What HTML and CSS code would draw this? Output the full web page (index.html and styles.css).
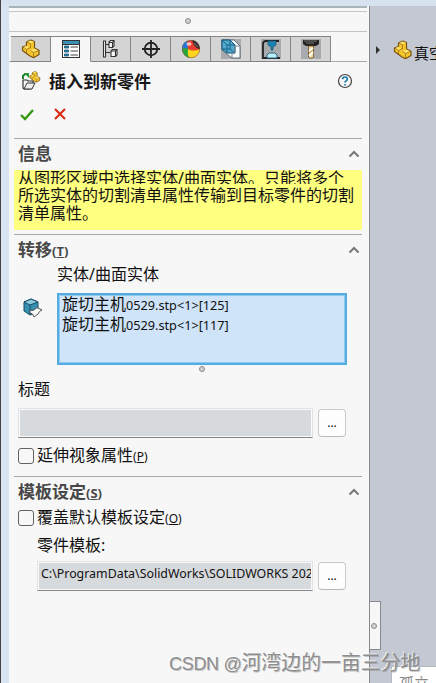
FILE: index.html
```html
<!DOCTYPE html>
<html lang="zh-CN">
<head>
<meta charset="utf-8">
<title>插入到新零件</title>
<link rel="stylesheet" href="styles.css">
</head>
<body>
<svg width="0" height="0" class="defs" aria-hidden="true">
  <defs>
    <symbol id="part" viewBox="0 0 20 20">
      <path d="M5.500 3 9.500 1l4 1.500V9l4.500 2.300v4.200l-5.500 3.200L9 17 1.500 11.500V8l4-1.500z" fill="#f5c72d" stroke="#79520f" stroke-width="1.200" stroke-linejoin="round"/>
      <path d="m6 3 3.300-1.500 3.700 1.300-3.300 1.700zM2 8.200l3.500-1.400 2.500 2-3 1.500zM9.500 11.500l3.800-2 4 1.900-4.600 2.300z" fill="#ffe56b"/>
      <path d="m5.500 3 4 1.700v4.500M2 8l3.500 2.500 4-2M9.500 11.500l3 2 5.500-2.200M12.500 13.500v5M5.500 10.500v3.500" fill="none" stroke="#9c6b11" stroke-width=".8"/>
    </symbol>
    <symbol id="chevron" viewBox="0 0 12 8"><path d="m1.500 6.500 4.500-4.500 4.500 4.500" fill="none" stroke="#777" stroke-width="2"/></symbol>
  </defs>
</svg>
<div class="window">
  <div class="frame-top"></div>
  <div class="workspace">
    <div class="frame-left"></div>
    <main class="panel">
      <div class="grip"><i class="dot"></i></div>
      <nav class="tabs">
        <span class="tab"><svg width="20" height="20"><use href="#part"/></svg></span>
        <span class="tab active"><svg width="18" height="18" viewBox="0 0 18 18"><rect x=".5" y=".5" width="17" height="17" fill="#fff" stroke="#333"/><path d="M1 1h16v3H1z" fill="#3a91b8"/><path d="M1 4.500h16" stroke="#333"/><path d="M2.500 6h4v2h-4zm0 4h4v2h-4zm0 4h4v2h-4z" fill="#2790bb" stroke="#174f69" stroke-width=".8"/><path d="M8.500 7H16m-7.500 4H16m-7.500 4H16" stroke="#444"/></svg></span>
        <span class="tab"><svg width="18" height="18" viewBox="0 0 18 18" fill="#fafafa" stroke="#333" stroke-width="1.100"><path d="M1.500 1h2v16h-2zM3.500 4.500h4m-4 8h5"/><path d="m7 2 1.500-1.500H12V6l-1.500 1.500H7zM9 11l1.500-1.500H15V15l-1.500 1.500H9z"/><path d="M7 2.500h3.500v5m0-5L12 1M9 11h4.500v5m0-5L15 9.500" fill="none"/></svg></span>
        <span class="tab"><svg width="20" height="20" viewBox="0 0 20 20" fill="none" stroke="#222"><circle cx="10" cy="10" r="6.300" stroke-width="1.800"/><path d="M10 1v18M1 10h18" stroke-width="1.800"/></svg></span>
        <span class="tab"><svg width="20" height="20" viewBox="0 0 20 20"><circle cx="10" cy="10" r="9" fill="#e83f2e"/><path d="M1 10q3-2 6 0l1 8.700Q2 17 1 10" fill="#26a738"/><path d="M1 10q0-6 5-8l1 8q-3-2-6 0" fill="#2878db"/><path d="M7 10q5 3 12 0-1 9-9 9-4 0-3-9" fill="#ffd51c"/><path d="M11 1q7 1 8 9-3 0-6-4z" fill="#25191c"/><path d="m13 4 4 4" stroke="#766" stroke-width="1.500"/><ellipse cx="8" cy="5" rx="2.500" ry="1.800" fill="#ffe5df" opacity=".8"/><circle cx="10" cy="10" r="8.700" fill="none" stroke="#665" stroke-width=".6"/></svg></span>
        <span class="tab"><svg class="tile" width="20" height="20" viewBox="0 0 20 20"><path d="M1 1h12l6 6v12h-8l-10-8z" fill="#f8fbfc" stroke="#456" stroke-width=".8"/><path d="M1 1h8l5 5v8H6l-5-4z" fill="#56a9ca" stroke="#0e5577"/><path d="m1 1 5 5h8M6 6v8M1 10h8V1m0 9 5 4" fill="none" stroke="#12658c"/><path d="M11 19v-5h3V7h5" fill="none" stroke="#789"/></svg></span>
        <span class="tab"><svg class="tile" width="20" height="20" viewBox="0 0 20 20"><path d="M18 2H5Q2 2 2 5v14h17" fill="none" stroke="#222" stroke-width="1.800"/><path d="M7 2h8v4l-3 2v3h-2V8L7 6z" fill="#1b82b0" stroke="#165878" stroke-width=".7"/><path d="M8 14h6l2 2v3H6v-3z" fill="#b9efff" stroke="#28637a"/></svg></span>
        <span class="tab"><svg class="tile" width="20" height="20" viewBox="0 0 20 20"><path d="M2 1h16v4l-3 2H5L2 5z" fill="#222"/><path d="M3 2h13M5 4h8" stroke="#777"/><path d="M7.500 7h5v11l-2.500 1.500L7.500 18z" fill="#f1dda2" stroke="#6c4d1d" stroke-width=".8"/><path d="m8 12 4-3m-4 8 4-4" stroke="#fff" stroke-width="1.800"/><path d="m8 14 4-3" stroke="#b89645"/></svg></span>
      </nav>
      <header class="heading">
        <svg width="20" height="20" viewBox="0 0 20 20"><path d="M2 17V9h4l1 1h5v3l-3 5H3z" fill="#f7f7f7" stroke="#333" stroke-width="1.200"/><path d="m3 18 3-6h8l-3 6z" fill="#eee" stroke="#333"/><path d="M2 8V5l2-2h2" fill="none" stroke="#23812a" stroke-width="2"/><path d="M3 2h5v5z" fill="#269932"/><svg x="8" y="0" width="12" height="12"><use href="#part"/></svg></svg>
        <h1>插入到新零件</h1>
        <svg class="help" width="16" height="16" viewBox="0 0 16 16" fill="none"><circle cx="8" cy="8" r="6.500" stroke="#444" stroke-width="1.200"/><path d="M5.700 6.200q0-2.200 2.300-2.200t2.300 2q0 1.200-1.300 1.900Q8 8.400 8 9.500M8 11v1.600" stroke="#187caa" stroke-width="1.700"/></svg>
      </header>
      <div class="actions">
        <svg width="14" height="13" viewBox="0 0 14 13"><path d="m1 7 4 4 8-9" fill="none" stroke="#329a0c" stroke-width="2.400"/></svg>
        <svg width="12" height="12" viewBox="0 0 12 12"><path d="m1 1 10 10M11 1 1 11" stroke="#db2b10" stroke-width="2.100"/></svg>
      </div>
      <section class="section info">
        <h2><span>信息</span><svg width="12" height="8"><use href="#chevron"/></svg></h2>
        <div class="notice"><p>从图形区域中选择实体/曲面实体。只能将多个</p><p>所选实体的切割清单属性传输到目标零件的切割</p><p>清单属性。</p></div>
      </section>
      <section class="section transfer">
        <h2><span>转移<small>(<u>T</u>)</small></span><svg width="12" height="8"><use href="#chevron"/></svg></h2>
        <div class="body-label">实体/曲面实体</div>
        <div class="bodies">
          <svg width="22" height="22" viewBox="0 0 22 22"><path d="m2 5 7-3 7 3v10l-8 3-6-4z" fill="#388fb2" stroke="#174f68"/><path d="m2 5 6 3 8-3-7-3z" fill="#8bc9df" stroke="#174f68"/><path d="M8 8v10" stroke="#174f68"/><path d="M8 13q2 1 4 0 3-3 4-2l4 2q-3 1-4 4l-4 3q-1-4-4-4z" fill="#fafafa" stroke="#555"/></svg>
          <div class="list"><div>旋切主机<small>0529.stp&lt;1&gt;[125]</small></div><div>旋切主机<small>0529.stp&lt;1&gt;[117]</small></div></div>
        </div>
        <div class="list-grip"><i class="dot"></i></div>
        <div class="title-label">标题</div>
        <div class="field"><div class="input"></div><button>...</button></div>
        <div class="check"><i></i><span>延伸视象属性<small>(<u>P</u>)</small></span></div>
      </section>
      <section class="section template">
        <h2><span>模板设定<small>(<u>S</u>)</small></span><svg width="12" height="8"><use href="#chevron"/></svg></h2>
        <div class="check"><i></i><span>覆盖默认模板设定<small>(<u>O</u>)</small></span></div>
        <div class="template-label">零件模板:</div>
        <div class="field indented"><div class="input"><div class="path">C:\ProgramData\SolidWorks\SOLIDWORKS 2022</div></div><button>...</button></div>
      </section>
    </main>
    <aside class="viewport">
      <div class="tree"><i class="arrow"></i><svg width="20" height="20"><use href="#part"/></svg><span>真空</span></div>
      <div class="handle"><i class="dot"></i></div>
      <div class="popup">孤立</div>
    </aside>
  </div>
  <div class="watermark"><span>CSDN @</span>河湾边的一亩三分地</div>
</div>
</body>
</html>
```

FILE: styles.css
```css
* { box-sizing: border-box; }
body { margin: 0; font: 16px/18px "Noto Sans", "Noto Sans CJK SC", sans-serif; color: #111; }
.defs { position: absolute; }
svg { display: block; flex: none; }
h1, h2, p { margin: 0; }
small { font-size: 12px; }
u { text-underline-offset: 1px; }
.window { position: relative; width: 436px; height: 683px; overflow: hidden; background: #c4c8d3; }
.frame-top { height: 6px; background: #d6e2ee; border-left: 1px solid #444; }
.workspace { display: flex; height: 677px; }
.frame-left { width: 9px; background: #d8e4f1; border-left: 1px solid #444; }
.panel { width: 361px; background: #f7f7f7; border-right: 1px solid #88898d; }
.grip { width: 358px; height: 26px; border-top: 2px solid #a9b4b9; border-bottom: 1px solid #c3c3c3; display: flex; justify-content: center; position: relative; padding-top: 10px; }
.grip::before { content: ""; position: absolute; top: 3px; left: 0; right: 0; height: 1px; background: #c6c6c6; }
.dot { display: block; width: 6px; height: 6px; border: 1px solid #8b8b8b; border-radius: 50%; background: #d0d0d0; }
.tabs { display: flex; width: 358px; height: 26px; margin-top: 4px; padding-left: 2px; background: linear-gradient(#aaa, #aaa) bottom/100% 1px no-repeat; }
.tab { width: 40px; height: 26px; display: flex; align-items: center; justify-content: center; background: #d4d4d4; border: 1px solid #858585; border-left: 0; }
.tab.active { background: #f7f7f7; border-bottom-color: #f7f7f7; }
.tile { background: #a9aaae; }
.heading { height: 38px; display: flex; align-items: center; padding: 0 16px 0 12px; }
.heading h1 { font-size: 17px; line-height: 20px; font-weight: 600; margin: 1px 0 0 8px; color: #171717; }
.heading .help { margin-left: auto; }
.actions { height: 38px; display: flex; align-items: center; gap: 20px; padding: 0 0 10px 11px; }
.section { margin: 0 7px 0 5px; border-top: 1px solid #aaa; }
.info { height: 96px; }
.transfer { height: 242px; }
.section h2 { height: 31px; padding: 0 2px 1px 4px; display: flex; align-items: center; justify-content: space-between; font-size: 17px; font-weight: 700; line-height: 20px; color: #484848; }
.section h2 small { font-size: 13px; font-weight: 700; }
.notice { height: 60px; padding: 0 4px; background: #ffff80; }
.notice p { height: 18px; line-height: 18px; white-space: nowrap; color: #111; }
.notice p:first-child { height: 14px; line-height: 17px; margin-bottom: 2px; overflow: hidden; }
.body-label { height: 27px; padding: 0 0 0 43px; line-height: 17px; }
.bodies { display: flex; padding-left: 8px; gap: 13px; }
.bodies > svg { margin-top: 4px; }
.list { width: 290px; height: 72px; background: #cfe4f8; border: 2px solid #54ace2; box-shadow: inset 0 0 0 1px #91c8f0; padding: 0 3px; }
.list div { height: 20px; line-height: 19px; white-space: nowrap; }
.list small { font-size: 12.7px; }
.list-grip { height: 15px; display: flex; justify-content: center; padding: 1px 0 0 28px; }
.title-label { height: 28px; padding-left: 4px; line-height: 18px; }
.field { display: flex; align-items: center; gap: 5px; padding-left: 4px; }
.input { width: 295px; height: 30px; background: #d7dadd; border: 1px solid #e2e2e2; border-bottom-color: #858585; box-shadow: inset 0 0 0 1px #fafafa; padding: 0 1px 0 3px; }
.path { font-size: 12.4px; line-height: 24px; white-space: nowrap; overflow: hidden; }
.field button { width: 28px; height: 28px; padding: 0; border: 1px solid #cacaca; border-bottom-color: #b8b8b8; border-radius: 4px; background: #fdfdfd; color: #111; font: 12px/24px "Noto Sans", sans-serif; }
.check { display: flex; align-items: center; height: 16px; padding-left: 4px; gap: 3px; white-space: nowrap; }
.check i { width: 16px; height: 16px; border: 1px solid #626262; border-radius: 3px; flex: none; }
.transfer .check { margin-top: 10px; }
.template .check { margin-top: 2px; }
.template-label { height: 35px; padding: 10px 0 0 23px; line-height: 18px; }
.indented { padding-left: 23px; }
.indented .input { width: 276px; }
.viewport { flex: 1; position: relative; overflow: hidden; }
.tree { display: flex; align-items: center; height: 25px; margin-top: 31px; padding-left: 6px; white-space: nowrap; }
.arrow { width: 0; height: 0; border: 4px solid transparent; border-left: 4px solid #303030; border-right: 0; flex: none; }
.tree svg { margin-left: 13px; }
.tree span { font-size: 15px; margin: 6px 0 0 1px; }
.handle { position: absolute; left: -1px; top: 595px; width: 12px; height: 49px; background: #f7f7f7; border: 1px solid #88898d; border-left: 0; display: flex; align-items: center; justify-content: center; padding-right: 1px; }
.popup { position: absolute; left: 21px; top: 660px; width: 60px; height: 30px; background: #fff; border: 1px solid #b6b8bd; color: #888; font-size: 15px; line-height: 18px; padding: 7px; }
.watermark { position: absolute; left: 169px; top: 650px; white-space: nowrap; font-size: 19.900px; line-height: 26px; color: #8e8e8e; text-shadow: -1px -1px #ffffffaa, 1px 1px #77777766; }
.watermark span { font-family: "Liberation Sans", sans-serif; font-size: 18px; letter-spacing: -.3px; }
```
